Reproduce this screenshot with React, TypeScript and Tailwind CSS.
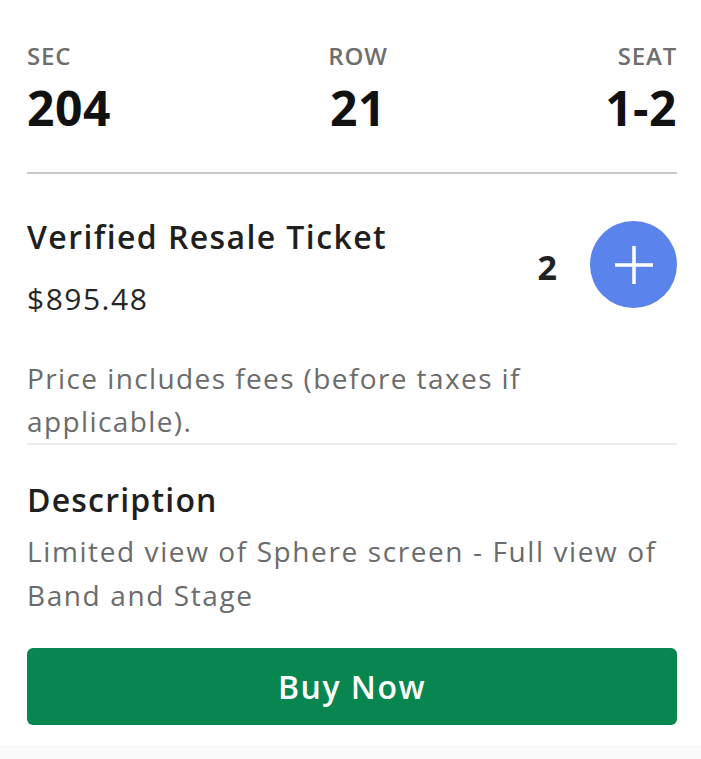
import React from 'react';

export default function App() {
  const seats = [
    { label: 'SEC', value: '204', align: 'items-start' },
    { label: 'ROW', value: '21', align: 'items-center' },
    { label: 'SEAT', value: '1-2', align: 'items-end' },
  ];

  return (
    <div className="w-[701px] h-[759px] bg-white flex flex-col font-['Open_Sans',sans-serif] text-[#1f1f1f]">
      <div className="pl-[27px] pr-[24px] flex flex-col flex-1">
        {/* Seat info */}
        <div className="flex justify-between pt-[40px] pb-[35px] border-b-2 border-[#c9c9c9]">
          {seats.map((s) => (
            <div key={s.label} className={`flex flex-col ${s.align}`}>
              <span className="text-[24px] leading-[32px] font-semibold text-[#6e6e6e] tracking-[0.8px]">{s.label}</span>
              <span className="text-[48px] leading-[58px] font-bold text-[#111] mt-[7px] tracking-[0.5px]">{s.value}</span>
            </div>
          ))}
        </div>

        {/* Ticket */}
        <div className="flex items-start justify-between pt-[43px]">
          <div className="flex flex-col">
            <span className="text-[32px] leading-[40px] font-semibold tracking-[1.4px]">Verified Resale Ticket</span>
            <span className="text-[30px] leading-[40px] text-[#262626] mt-[22px] tracking-[1.5px]">$895.48</span>
          </div>
          <div className="flex items-center gap-[33px] pt-[4px]">
            <span className="text-[34px] font-bold text-[#222] pt-[6px]">2</span>
            <button className="w-[87px] h-[87px] rounded-full bg-[#5a84eb] flex items-center justify-center">
              <svg width="40" height="40" viewBox="0 0 40 40">
                <path d="M20 1v38M1 20h38" stroke="white" strokeWidth="3.5" />
              </svg>
            </button>
          </div>
        </div>

        <p className="mt-[38px] text-[28px] leading-[43px] text-[#6b6b6b] pr-[120px] border-b-2 border-[#ececec] tracking-[1.4px]">
          Price includes fees (before taxes if applicable).
        </p>

        <h3 className="mt-[35px] text-[32px] leading-[40px] font-semibold tracking-[1.2px]">Description</h3>
        <p className="mt-[9px] text-[28px] leading-[44px] text-[#6b6b6b] tracking-[1.6px]">
          Limited view of Sphere screen - Full view of Band and Stage
        </p>

        <button className="mt-[31px] h-[77px] w-full rounded-[6px] bg-[#07874f] text-white text-[32px] font-semibold tracking-[1.5px]">
          Buy Now
        </button>
      </div>
      <div className="h-[14px] bg-[#fafafa] mt-auto" />
    </div>
  );
}
